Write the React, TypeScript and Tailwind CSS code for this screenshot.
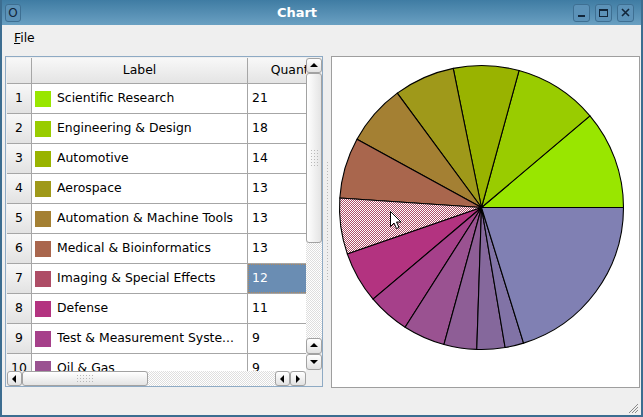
import React from 'react';

const rows = [
  { label: 'Scientific Research', qty: 21, color: '#99e600' },
  { label: 'Engineering & Design', qty: 18, color: '#99cc00' },
  { label: 'Automotive', qty: 14, color: '#99b300' },
  { label: 'Aerospace', qty: 13, color: '#9f991a' },
  { label: 'Automation & Machine Tools', qty: 13, color: '#a48033' },
  { label: 'Medical & Bioinformatics', qty: 13, color: '#a9664d' },
  { label: 'Imaging & Special Effects', qty: 12, color: '#ae4d66' },
  { label: 'Defense', qty: 11, color: '#b33380' },
  { label: 'Test & Measurement Systems', qty: 9, color: '#a6408a', shown: 'Test & Measurement Syste...' },
  { label: 'Oil & Gas', qty: 9, color: '#9a5291' },
  { label: 'Entertainment & Broadcasting', qty: 7, color: '#8e5e96', shown: 'Entertainment & Broadcast...' },
  { label: 'Financial', qty: 6, color: '#85689c' },
  { label: 'Consumer Electronics', qty: 4, color: '#8173a6' },
  { label: 'Other', qty: 38, color: '#8080b3' },
];

const SELECTED = 6;

function Arrow({ dir }: { dir: 'up' | 'down' | 'left' | 'right' }) {
  const pts = {
    up: '1,6 5,2 9,6',
    down: '1,3 5,7 9,3',
    left: '6,1 2,5 6,9',
    right: '3,1 7,5 3,9',
  }[dir];
  return (
    <svg width="10" height="10" viewBox="0 0 10 10">
      <polygon points={pts} fill="#000" />
    </svg>
  );
}

function SBtn({ dir, className }: { dir: 'up' | 'down' | 'left' | 'right'; className: string }) {
  return (
    <div className={`flex items-center justify-center rounded-[3px] border border-[#a2a2a2] bg-gradient-to-b from-white to-[#e2e2e2] ${className}`}>
      <Arrow dir={dir} />
    </div>
  );
}

const grip = 'bg-[radial-gradient(circle,#b8b8b8_0.8px,transparent_1px)] bg-[length:3px_3px]';
const groove = 'bg-[repeating-conic-gradient(#dedede_0_25%,#ffffff_0_50%)] bg-[length:2px_2px]';

function Pie() {
  const cx = 149.5;
  const cy = 150.5;
  const r = 142;
  const total = rows.reduce((s, x) => s + x.qty, 0);
  let start = 0;
  const pt = (a: number) => {
    const rad = (a * Math.PI) / 180;
    return `${(cx + r * Math.cos(rad)).toFixed(2)} ${(cy - r * Math.sin(rad)).toFixed(2)}`;
  };
  return (
    <svg width="307" height="330" className="block">
      <defs>
        <pattern id="hatch" width="2" height="2" patternUnits="userSpaceOnUse">
          <rect width="2" height="2" fill="#fff" />
          <rect width="1" height="1" fill="#ae4d66" />
          <rect x="1" y="1" width="1" height="1" fill="#ae4d66" />
        </pattern>
      </defs>
      {rows.map((row, i) => {
        const sweep = (row.qty / total) * 360;
        const a0 = start;
        const a1 = start + sweep;
        start = a1;
        const d = `M ${cx} ${cy} L ${pt(a0)} A ${r} ${r} 0 ${sweep > 180 ? 1 : 0} 0 ${pt(a1)} Z`;
        return (
          <path
            key={row.label}
            d={d}
            fill={i === SELECTED ? 'url(#hatch)' : row.color}
            stroke="#000"
            strokeWidth="1.1"
            strokeLinejoin="round"
          />
        );
      })}
      {/* mouse pointer */}
      <g transform="translate(58.5 154.5)">
        <path d="M0 0 L0 15 L3.5 11.5 L6 17 L8.5 16 L6 10.5 L10.5 10.5 Z" fill="#fff" stroke="#000" strokeWidth="1" strokeLinejoin="round" />
      </g>
    </svg>
  );
}

export default function App() {
  return (
    <div className="w-[643px] h-[417px] flex flex-col bg-[#efefef] overflow-hidden text-black" style={{ fontFamily: '"DejaVu Sans", sans-serif' }}>
      {/* Title bar */}
      <div className="h-[25px] shrink-0 flex items-center px-[3px] bg-gradient-to-b from-[#3f7ca3] to-[#6aa0c2] border-x-2 border-[#3c6d90]">
        <div className="w-[16px] h-[18px] rounded-[3px] border border-[#3e6f92] bg-[#5c92b8] flex items-center justify-center text-[12px] text-[#12263a] leading-none">O</div>
        <div className="flex-1 text-center text-white font-bold text-[13px]">Chart</div>
        <div className="flex gap-[5px] pr-[4px]">
          <div className="w-[17px] h-[18px] rounded-[3px] border border-[#3e6f92] bg-[#5c92b8] flex items-end justify-center pb-[4px]">
            <div className="w-[7px] h-[2px] bg-[#12263a]" />
          </div>
          <div className="w-[17px] h-[18px] rounded-[3px] border border-[#3e6f92] bg-[#5c92b8] flex items-center justify-center">
            <div className="w-[9px] h-[8px] border border-[#12263a] border-t-2" />
          </div>
          <div className="w-[17px] h-[18px] rounded-[3px] border border-[#3e6f92] bg-[#5c92b8] flex items-center justify-center">
            <svg width="9" height="9" viewBox="0 0 9 9">
              <path d="M1 1 L8 8 M8 1 L1 8" stroke="#12263a" strokeWidth="1.6" />
            </svg>
          </div>
        </div>
      </div>

      <div className="flex-1 flex flex-col border-x-2 border-b-2 border-[#3c6d90]">
        {/* Menu bar */}
        <div className="h-[27px] shrink-0 flex items-center pl-[12px] text-[12.4px]">
          <span>
            <span className="underline">F</span>ile
          </span>
        </div>

        {/* Main area */}
        <div className="h-[337px] shrink-0 flex items-start pt-[4px] pl-[3px]">
          {/* Table view */}
          <div className="w-[318px] h-[331px] border border-[#8eaac4] pl-px pt-px bg-[#efefef] flex flex-col">
            <div className="flex h-[313px]">
              <div className="w-[299px] h-[313px] overflow-hidden bg-white text-[12.4px]">
                {/* header */}
                <div className="flex h-[26px]">
                  <div className="w-[25px] shrink-0 border-r border-b border-[#a6a6a6] bg-gradient-to-b from-[#f8f8f8] to-[#e4e4e4]" />
                  <div className="w-[216px] shrink-0 flex items-center justify-center border-r border-b border-[#a6a6a6] bg-gradient-to-b from-[#f8f8f8] to-[#e4e4e4]">Label</div>
                  <div className="w-[100px] shrink-0 flex items-center justify-center border-r border-b border-[#a6a6a6] bg-gradient-to-b from-[#f8f8f8] to-[#e4e4e4]">Quantity</div>
                </div>
                {rows.map((row, i) => (
                  <div key={row.label} className="flex h-[30px]">
                    <div className="w-[25px] shrink-0 flex items-center justify-center border-r border-b border-[#a6a6a6] bg-gradient-to-b from-[#f8f8f8] to-[#e2e2e2]">{i + 1}</div>
                    <div className="w-[216px] shrink-0 flex items-center border-r border-b border-[#a6a6a6] pl-[3px] pr-[4px]">
                      <div className="w-[16px] h-[16px] shrink-0" style={{ backgroundColor: row.color }} />
                      <div className="ml-[6px] whitespace-nowrap overflow-hidden">{row.shown ?? row.label}</div>
                    </div>
                    {i === SELECTED ? (
                      <div className="w-[100px] shrink-0 flex items-center border-b border-[#a6a6a6]">
                        <div className="w-full h-full flex items-center pl-[3px] bg-[#6a8db3] text-white border border-dotted border-[#b08a60]">{row.qty}</div>
                      </div>
                    ) : (
                      <div className="w-[100px] shrink-0 flex items-center pl-[4px] border-r border-b border-[#a6a6a6]">{row.qty}</div>
                    )}
                  </div>
                ))}
              </div>
              {/* vertical scrollbar */}
              <div className="w-[16px] h-[313px] flex flex-col">
                <SBtn dir="up" className="h-[15px]" />
                <div className="h-[170px] rounded-[3px] border border-[#a2a2a2] bg-gradient-to-r from-white to-[#e4e4e4] flex items-center justify-center">
                  <div className={`w-[9px] h-[18px] ${grip}`} />
                </div>
                <div className={`flex-1 ${groove}`} />
                <SBtn dir="up" className="h-[16px]" />
                <SBtn dir="down" className="h-[16px]" />
                <div className="h-px" />
              </div>
            </div>
            {/* horizontal scrollbar */}
            <div className="flex h-[15px]">
              <div className="w-[299px] flex">
                <SBtn dir="left" className="w-[15px]" />
                <div className="w-[126px] rounded-[3px] border border-[#a2a2a2] bg-gradient-to-b from-white to-[#e4e4e4] flex items-center justify-center">
                  <div className={`w-[18px] h-[9px] ${grip}`} />
                </div>
                <div className={`flex-1 ${groove}`} />
                <SBtn dir="left" className="w-[15px]" />
                <SBtn dir="right" className="w-[16px]" />
              </div>
              <div className="w-[16px]" />
            </div>
          </div>

          {/* Splitter handle */}
          <div className="w-[8px] h-[331px] flex items-center justify-center">
            <div className={`w-[3px] h-[120px] mt-[-2px] ${grip}`} />
          </div>

          {/* Pie view */}
          <div className="w-[309px] h-[332px] border border-[#9e9e9e] bg-white">
            <Pie />
          </div>
        </div>

        {/* Status bar */}
        <div className="flex-1 flex items-end justify-end pr-[2px] pb-[1px]">
          <svg width="12" height="12" viewBox="0 0 12 12">
            <path d="M11 2 L2 11 M11 5 L5 11 M11 8 L8 11" stroke="#8a8a8a" strokeWidth="1" />
          </svg>
        </div>
      </div>
    </div>
  );
}
